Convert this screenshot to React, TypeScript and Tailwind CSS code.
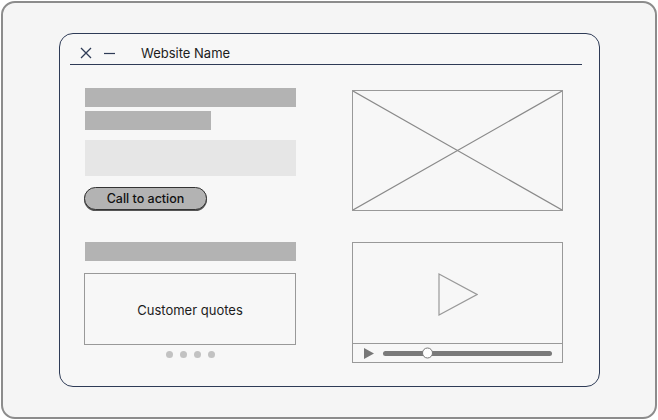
import React from 'react';

const bar = 'bg-[#b3b3b3]';
const stroke = '#8a8a8a';

function CloseIcon() {
  return (
    <svg width="12" height="12" viewBox="0 0 12 12" className="shrink-0">
      <path d="M1 1L11 11M11 1L1 11" stroke="#2e3b56" strokeWidth="1.3" fill="none" />
    </svg>
  );
}

function MinimizeIcon() {
  return (
    <svg width="11" height="12" viewBox="0 0 11 12" className="shrink-0">
      <path d="M0 6.5H11" stroke="#2e3b56" strokeWidth="1.2" fill="none" />
    </svg>
  );
}

function ImagePlaceholder() {
  return (
    <div className="w-[211px] h-[121px] border-[1.5px] border-[#999] mt-[25px]">
      <svg width="100%" height="100%" viewBox="0 0 100 100" preserveAspectRatio="none" className="block">
        <path d="M0 0L100 100M100 0L0 100" stroke={stroke} strokeWidth="1.2" vectorEffect="non-scaling-stroke" fill="none" />
      </svg>
    </div>
  );
}

function VideoPlayer() {
  return (
    <div className="w-[211px] h-[121px] border-[1.5px] border-[#999] flex flex-col">
      <div className="flex-1 flex items-center justify-center pt-[3px] pl-px">
        <svg width="40" height="43" viewBox="0 0 40 43">
          <path d="M1 1L39 21.5L1 42Z" stroke="#999" strokeWidth="1.2" fill="none" />
        </svg>
      </div>
      <div className="h-[19px] border-t-[1.5px] border-[#999] flex items-center pl-[11px] pr-[10px] gap-[9px]">
        <svg width="10" height="11" viewBox="0 0 10 11" className="shrink-0">
          <path d="M0 0L10 5.5L0 11Z" fill="#777" />
        </svg>
        <div className="relative flex-1 h-[5px] rounded-full bg-[#7a7a7a]">
          <div className="absolute left-[39px] top-1/2 -translate-y-1/2 w-[11px] h-[11px] rounded-full bg-white border border-[#777]" />
        </div>
      </div>
    </div>
  );
}

export default function App() {
  return (
    <div className="w-[658px] h-[420px] bg-white p-px font-['Inter',_'Liberation_Sans',_sans-serif] text-[#1a1a1a]">
      <div className="w-[656px] h-[418px] rounded-[14px] border-2 border-[#8c8c8c] bg-[#f5f5f5] pl-[56px] pt-[30px]">
        <div className="w-[541px] h-[354px] rounded-[14px] border border-[#2e3b56] bg-[#f7f7f7]">
          {/* title bar */}
          <div className="ml-[10px] mr-[17px] h-[31px] pt-[8px] pl-[10px] border-b border-[#2e3b56] flex items-center">
            <CloseIcon />
            <div className="ml-[12px]">
              <MinimizeIcon />
            </div>
            <span className="ml-[26px] text-[13px] leading-none text-[#1c1c1c]">Website Name</span>
          </div>

          {/* hero row */}
          <div className="pl-[25px] flex gap-[56px]">
            <div className="w-[211px] flex flex-col">
              <div className={`mt-[23px] h-[19px] w-[211px] ${bar}`} />
              <div className={`mt-[4px] h-[19px] w-[126px] ${bar}`} />
              <div className="mt-[10px] h-[36px] w-[211px] bg-[#e6e6e6]" />
              <button className="mt-[11px] -ml-px w-[123px] h-[23px] pt-px rounded-full border border-[#333] bg-[#b3b3b3] shadow-[0_1px_0_#555] text-[12.5px] font-medium leading-none text-[#111]">
                Call to action
              </button>
            </div>
            <ImagePlaceholder />
          </div>

          {/* content row */}
          <div className="pl-[25px] mt-[31px] flex gap-[56px]">
            <div className="w-[211px] flex flex-col">
              <div className={`h-[19px] w-[211px] ${bar}`} />
              <div className="mt-[12px] -ml-px w-[212px] h-[72px] pt-[4px] border-[1.5px] border-[#999] flex items-center justify-center text-[13px] text-[#1c1c1c]">
                Customer quotes
              </div>
              <div className="mt-[6px] flex justify-center gap-[7px]">
                <span className="w-[7px] h-[7px] rounded-full bg-[#c2c2c2]" />
                <span className="w-[7px] h-[7px] rounded-full bg-[#c2c2c2]" />
                <span className="w-[7px] h-[7px] rounded-full bg-[#c2c2c2]" />
                <span className="w-[7px] h-[7px] rounded-full bg-[#c2c2c2]" />
              </div>
            </div>
            <VideoPlayer />
          </div>
        </div>
      </div>
    </div>
  );
}
